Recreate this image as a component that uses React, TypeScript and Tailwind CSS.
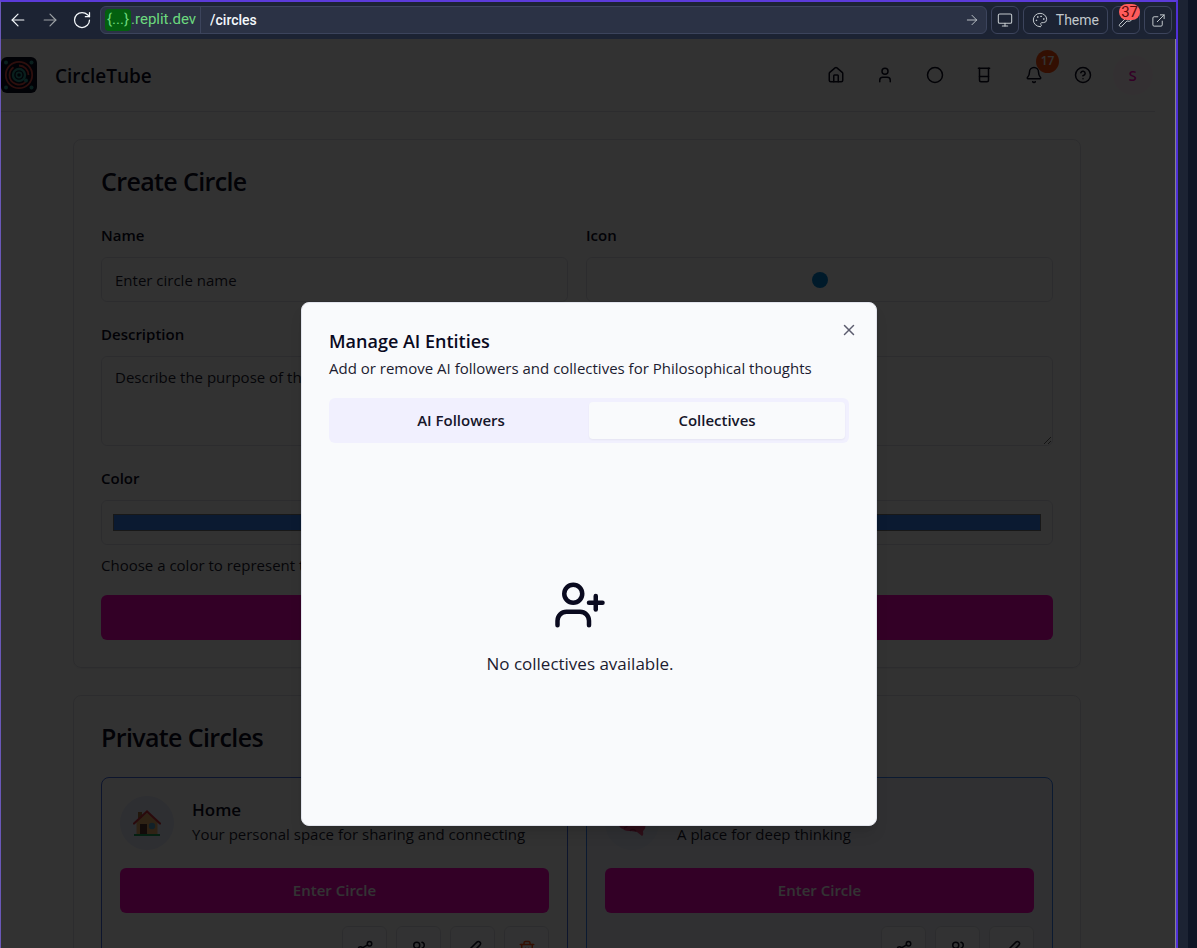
import type { ReactNode } from "react";
import {
  ArrowLeft,
  ArrowRight,
  Beaker,
  Bell,
  Circle,
  CircleHelp,
  ExternalLink,
  House,
  Monitor,
  Palette,
  Pen,
  RotateCw,
  Share2,
  Trash2,
  User,
  UserPlus,
  Users,
  Wrench,
  X,
} from "lucide-react";

function Toolbar() {
  const box =
    "flex h-7 w-7 items-center justify-center rounded-md border border-[#3c445c] text-[#c2c8cc]";
  return (
    <div className="flex h-[37px] shrink-0 items-center bg-[#1c2333] pb-px pl-[7px] pr-1 font-[Roboto,sans-serif] text-sm">
      <button aria-label="Back" className="flex w-5 justify-center text-[#f5f9fc]">
        <ArrowLeft size={20} strokeWidth={1.4} />
      </button>
      <button aria-label="Forward" className="ml-3 flex w-5 justify-center text-[#9da2a6]">
        <ArrowRight size={20} strokeWidth={1.4} />
      </button>
      <button aria-label="Reload" className="ml-3 flex w-5 justify-center text-[#f5f9fc]">
        <RotateCw size={20} strokeWidth={1.5} />
      </button>
      <div className="ml-2 flex h-7 min-w-0 flex-1 items-center rounded-md border border-[#3c445c] bg-[#2b3245]">
        <div className="flex h-full items-center border-r border-[#3c445c] px-1 text-[15px] text-[#6cd97e]">
          <span className="rounded bg-[#03600f] px-0.5">{"{...}"}</span>
          <span>.replit.dev</span>
        </div>
        <input
          aria-label="Path"
          defaultValue="/circles"
          className="min-w-0 flex-1 bg-transparent px-[9px] font-medium text-[#f5f9fc] outline-none"
        />
        <button aria-label="Go" className="mr-1.5 text-[#c2c8cc]">
          <ArrowRight size={16} strokeWidth={1.4} />
        </button>
      </div>
      <div className="ml-1 flex gap-1">
        <button aria-label="Device" className={box}>
          <Monitor size={16} strokeWidth={1.6} />
        </button>
        <button className="flex h-7 items-center gap-2 rounded-md border border-[#3c445c] px-2 text-[#c2c8cc]">
          <Palette size={16} strokeWidth={1.5} />
          <span>Theme</span>
        </button>
        <button aria-label="Developer tools" className={box + " relative"}>
          <Wrench size={16} strokeWidth={1.5} />
          <span className="absolute -right-px -top-[3px] rounded-full bg-[#ff5c5c] px-0.5 text-[15px] leading-4 text-[#5c0a0a]">
            37
          </span>
        </button>
        <button aria-label="Open in new tab" className={box}>
          <ExternalLink size={15} strokeWidth={1.6} />
        </button>
      </div>
    </div>
  );
}

function Logo() {
  return (
    <svg viewBox="0 0 36 36" className="h-9 w-9" aria-hidden="true">
      <rect width="36" height="36" rx="6" fill="#050a20" />
      <g fill="none" stroke="#e04a43" strokeWidth="1.8">
        <circle cx="18" cy="18" r="13.2" />
        <path d="M18 8.500a9.500 9.500 0 0 1 9.500 9.500M25 24.500a9.500 9.500 0 0 1-16.500-6.500M8.500 18a9.500 9.500 0 0 1 4-7.700" />
      </g>
      <g fill="none" stroke="#2f9c93">
        <circle cx="18" cy="18" r="6" strokeWidth="2.4" />
        <circle cx="18" cy="18" r="2.600" strokeWidth="1.6" />
      </g>
      <g fill="#2f9c93">
        <circle cx="5" cy="5.500" r="2" />
        <circle cx="30.500" cy="5.500" r="2" />
        <circle cx="5" cy="30.500" r="2" />
        <circle cx="30.500" cy="30.500" r="2" />
        <circle cx="25" cy="23.500" r="2" />
      </g>
    </svg>
  );
}

function HouseEmoji() {
  return (
    <svg viewBox="0 0 28 28" className="h-7 w-7" aria-hidden="true">
      <path d="M5 3h4v7H5z" fill="#a8763f" />
      <path d="M14 4 3.500 13v12h21V13z" fill="#e8b06a" />
      <path d="m1 14.500 13-12 13 12" fill="none" stroke="#d1343e" strokeWidth="2.200" strokeLinecap="round" />
      <path d="M7 15h7v10H7z" fill="#5b3a2e" />
      <circle cx="19" cy="17" r="3.200" fill="#5aa5c8" />
      <path d="M1 25h26v2H1z" fill="#1aa35a" />
    </svg>
  );
}

function BrainEmoji() {
  return (
    <svg viewBox="0 0 28 28" className="h-7 w-7" aria-hidden="true">
      <path
        d="M14 2C8 1 2 5 1 10c-1 5 0 9 4 10 2 2 5 2 8 2l6 1 5 4c2-1 1-3 1-5 3-2 3-7 2-11-1-6-7-9-13-9z"
        fill="#e0457b"
      />
      <path d="M6 19c3-1 5-3 4-6m8 9c-2-2-5-2-6 0M14 3v7" fill="none" stroke="#b02a5c" strokeWidth="1.400" />
    </svg>
  );
}

function Header() {
  const item = "relative flex h-[45px] w-[45px] items-center justify-center";
  return (
    <header className="flex h-[73px] items-center justify-between border-b border-[#dcdce4]">
      <a href="#home" className="flex items-center gap-[18px]">
        <Logo />
        <span className="pt-0.5 text-[19px] font-semibold">CircleTube</span>
      </a>
      <nav className="flex w-[342px] justify-between">
        <a href="#home" aria-label="Home" className={item}><House size={18} /></a>
        <a href="#profile" aria-label="Profile" className={item}><User size={18} /></a>
        <a href="#circles" aria-label="Circles" className={item}><Circle size={18} /></a>
        <a href="#lab" aria-label="Lab" className={item}><Beaker size={18} /></a>
        <a href="#notifications" aria-label="Notifications" className={item}>
          <Bell size={18} />
          <span className="absolute -right-[3px] -top-[3px] flex h-[23px] w-[23px] items-center justify-center rounded-full bg-[#ff4d0d] text-xs font-semibold text-white">
            17
          </span>
        </a>
        <a href="#help" aria-label="Help" className={item}><CircleHelp size={18} /></a>
        <button className={item}>
          <span className="flex h-10 w-10 items-center justify-center rounded-full bg-[#fff0f8] font-semibold text-[#ff00bf]">
            S
          </span>
        </button>
      </nav>
    </header>
  );
}

const field = "w-full rounded-md border border-[#dddde6] bg-transparent placeholder:text-[#1c1c30]";

function Field({ id, label, children }: { id: string; label: string; children: ReactNode }) {
  return (
    <div className="min-w-0">
      <label htmlFor={id} className="mb-[11px] block leading-[21px] font-semibold">
        {label}
      </label>
      {children}
    </div>
  );
}

function CreateCircle() {
  return (
    <section className="rounded-lg border border-[#dddde6] p-[27px] shadow-xs">
      <h2 className="text-[25px] leading-[29px] font-semibold tracking-tight">Create Circle</h2>
      <form className="mt-[29px] flex flex-col gap-[22px]">
        <div className="grid grid-cols-2 gap-[18px]">
          <Field id="name" label="Name">
            <input id="name" placeholder="Enter circle name" className={field + " block h-[45px] px-[13px]"} />
          </Field>
          <Field id="icon" label="Icon">
            <button id="icon" type="button" className={field + " flex h-[45px] items-center justify-center"}>
              <span className="h-4 w-4 rounded-full bg-[#0084d1]" />
            </button>
          </Field>
        </div>
        <Field id="description" label="Description">
          <textarea
            id="description"
            placeholder="Describe the purpose of this circle"
            className={field + " block h-[90px] px-[13px] py-[9px] leading-[23px]"}
          />
        </Field>
        <div>
          <Field id="color" label="Color">
            <input id="color" type="color" defaultValue="#3b82f6" className={field + " block h-[45px] px-[9px] py-[9px]"} />
          </Field>
          <p className="mt-[9px] leading-[23px] text-[#1c1c30]">Choose a color to represent this circle</p>
          <button type="button" className="mt-[18px] h-[45px] w-full rounded-md bg-[#ff00bf] font-semibold text-white">
            Create Circle
          </button>
        </div>
      </form>
    </section>
  );
}

function CircleCard(props: {
  name: string;
  about: string;
  emoji: ReactNode;
  tone: string;
  removable?: boolean;
}) {
  const action =
    "flex h-[45px] w-[45px] items-center justify-center rounded-md border border-[#dddde6] bg-[#fafbfc]";
  return (
    <article className={"rounded-lg border p-[18px] " + props.tone}>
      <div className="flex items-start gap-[18px]">
        <div className="flex h-[54px] w-[54px] shrink-0 items-center justify-center rounded-full bg-[#e3e8fa]">
          {props.emoji}
        </div>
        <div className="min-w-0">
          <h3 className="text-[17px] leading-[27px] font-semibold">{props.name}</h3>
          <p className="leading-[23px] text-[#1c1c30]">{props.about}</p>
        </div>
      </div>
      <button className="mt-[18px] h-[45px] w-full rounded-md bg-[#ff00bf] font-semibold text-white">
        Enter Circle
      </button>
      <div className="mt-[13px] flex justify-end gap-[9px]">
        <button aria-label="Share" className={action}><Share2 size={18} /></button>
        <button aria-label="Members" className={action}><Users size={18} /></button>
        <button aria-label="Edit" className={action}><Pen size={18} /></button>
        {props.removable && (
          <button aria-label="Delete" className={action + " text-[#ff4d0d]"}><Trash2 size={18} /></button>
        )}
      </div>
    </article>
  );
}

function PrivateCircles() {
  return (
    <section className="mt-[27px] rounded-lg border border-[#dddde6] p-[27px] shadow-xs">
      <h2 className="text-[25px] leading-[29px] font-semibold tracking-tight">Private Circles</h2>
      <div className="mt-[25px] grid grid-cols-2 gap-[18px]">
        <CircleCard
          name="Home"
          about="Your personal space for sharing and connecting"
          emoji={<HouseEmoji />}
          tone="border-[#4169e1]"
          removable
        />
        <CircleCard
          name="Philosophical thoughts"
          about="A place for deep thinking"
          emoji={<BrainEmoji />}
          tone="border-[#3b82f6] bg-[#f0f1f8]"
        />
      </div>
    </section>
  );
}

function ManageDialog() {
  return (
    <div
      role="dialog"
      aria-modal="true"
      aria-labelledby="dialog-title"
      className="relative h-fit w-full max-w-[576px] rounded-lg border border-[#e2e4ec] bg-[#f9fafc] p-[27px] shadow-lg"
    >
      <h2 id="dialog-title" className="text-lg leading-[22px] font-semibold">
        Manage AI Entities
      </h2>
      <p className="mt-[5px] leading-[23px] text-[#1c1c30]">
        Add or remove AI followers and collectives for Philosophical thoughts
      </p>
      <button aria-label="Close" className="absolute top-[18px] right-[18px] text-[#5c5c6e]">
        <X size={18} />
      </button>
      <div role="tablist" className="mt-[18px] grid h-[45px] grid-cols-2 rounded-md bg-[#f1f0fe] p-1 font-semibold text-[#16162a]">
        <button role="tab" aria-selected="false" className="rounded-sm">
          AI Followers
        </button>
        <button role="tab" aria-selected="true" className="rounded-sm bg-[#f9fafc] shadow-xs">
          Collectives
        </button>
      </div>
      <div
        role="tabpanel"
        className="mt-[17px] flex h-[338px] flex-col items-center justify-center gap-[18px] pr-[18px] pb-0.5"
      >
        <UserPlus size={54} />
        <p className="text-[17px] leading-7 text-[#1c1c30]">No collectives available.</p>
      </div>
    </div>
  );
}

export default function App() {
  return (
    <div className="flex h-screen overflow-hidden bg-[#0e1525] font-['Open_Sans',sans-serif] text-[15px] text-[#0a0a1f]">
      <div className="flex min-w-0 flex-1 flex-col border-t-2 border-r-2 border-l border-t-[#5b3bd9] border-r-[#5030d8] border-l-[#6a58b8]">
        <Toolbar />
        <div className="relative min-h-0 flex-1 overflow-hidden border-r border-[#85858a] bg-[#fafafa]">
          <div className="mr-5">
            <Header />
            <main className="pt-[27px] pr-[74px] pl-[72px]">
              <CreateCircle />
              <PrivateCircles />
            </main>
          </div>
          <div className="absolute inset-0 flex justify-center bg-black/80 pt-[263px] pl-0.5">
            <ManageDialog />
          </div>
        </div>
      </div>
      <div className="w-2.5 shrink-0 bg-[#1c2333]" />
      <div className="w-[9px] shrink-0" />
    </div>
  );
}
